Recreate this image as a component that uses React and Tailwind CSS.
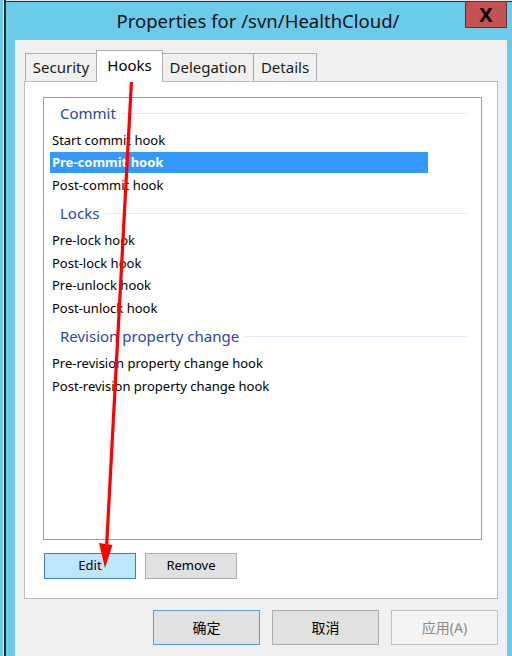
import React from "react";

const font = { fontFamily: '"Noto Sans", "Noto Sans CJK SC", sans-serif' };

function Item({ label, selected }) {
  if (selected) {
    return (
      <div className="h-[22.5px] flex items-center">
        <div className="ml-[6px] w-[378px] h-[21px] bg-[#3399ff] flex items-center pl-[2px] text-white font-bold text-[13px] leading-none">
          {label}
        </div>
      </div>
    );
  }
  return (
    <div className="h-[22.5px] flex items-center pl-[8px] text-[13px] leading-none text-black">
      {label}
    </div>
  );
}

function Header({ label, first }) {
  return (
    <div className={`${first ? "mt-[3px]" : "mt-[5px]"} mb-[4px] h-[24px] flex items-center pl-[16px] pr-[14px]`}>
      <span className="text-[15px] leading-none text-[#2b44a8] whitespace-nowrap">{label}</span>
      <div className="ml-[6px] flex-1 h-px bg-[#e3e9f5]" />
    </div>
  );
}

function Tab({ label, selected, w, extra }) {
  if (selected) {
    return (
      <div
        className={`relative z-10 -mb-px h-[32px] bg-white border border-b-0 border-[#acacac] flex items-start justify-center pt-[3px] text-[15px] text-black ${w} ${extra || ""}`}
      >
        {label}
      </div>
    );
  }
  return (
    <div
      className={`h-[28px] bg-[#f0f0f0] border border-b-0 border-[#acacac] flex items-center justify-center text-[15px] text-[#1a1a1a] ${w} ${extra || ""}`}
    >
      {label}
    </div>
  );
}

export default function App() {
  return (
    <div className="relative w-[512px] h-[656px] overflow-hidden bg-[#6bcbeb] flex" style={font}>
      <div className="w-[3px] h-full bg-[#6bcbeb]" />
      <div className="w-[1px] h-full bg-[#e8e8e8]" />
      <div className="flex-1 flex flex-col border-l-2 border-[#2d2d2d]">
        <div className="h-[1px] bg-[#e6e6e6]" />
        <div className="h-[1px] bg-[#2d2d2d]" />
        <div className="relative h-[38px] flex items-center justify-center pr-[2px]">
          <span className="text-[18.5px] text-[#111] leading-none">Properties for /svn/HealthCloud/</span>
          <div className="absolute right-[5px] -top-[1px] w-[42px] h-[27px] bg-[#c75050] border border-[#5b3434] flex items-center justify-center">
            <span className="text-[20px] font-bold text-black leading-none">X</span>
          </div>
        </div>
        <div className="flex-1 flex">
          <div className="w-[9px] bg-[#6bcbeb]" />
          <div className="w-[492px] bg-[#f0f0f0] flex flex-col px-[9px]">
            <div className="mt-[11px] h-[30px] flex items-end pl-[1px]">
              <Tab label="Security" w="w-[72px]" />
              <Tab label="Hooks" selected w="w-[67px]" extra="-ml-px" />
              <Tab label="Delegation" w="w-[92px]" extra="-ml-px" />
              <Tab label="Details" w="w-[64px]" extra="-ml-px" />
            </div>
            <div className="h-[518px] bg-white border border-[#bdbdbd] flex flex-col">
              <div className="ml-[18px] mt-[15px] w-[439px] h-[443px] border border-[#9c9c9c] flex flex-col">
                <Header label="Commit" first />
                <Item label="Start commit hook" />
                <Item label="Pre-commit hook" selected />
                <Item label="Post-commit hook" />
                <Header label="Locks" />
                <Item label="Pre-lock hook" />
                <Item label="Post-lock hook" />
                <Item label="Pre-unlock hook" />
                <Item label="Post-unlock hook" />
                <Header label="Revision property change" />
                <Item label="Pre-revision property change hook" />
                <Item label="Post-revision property change hook" />
              </div>
              <div className="mt-[13px] ml-[19px] flex gap-[9px]">
                <button className="w-[92px] h-[26px] bg-[#bee6fd] border border-[#3c7fb1] text-[13px] text-black flex items-center justify-center">
                  Edit
                </button>
                <button className="w-[92px] h-[26px] bg-[#e1e1e1] border border-[#adadad] text-[13px] text-black flex items-center justify-center">
                  Remove
                </button>
              </div>
            </div>
            <div className="mt-[11px] flex justify-end gap-[12px]">
              <button className="w-[107px] h-[35px] bg-[#e1e1e1] border border-[#5b9bd5] text-[14px] text-black flex items-center justify-center">
                确定
              </button>
              <button className="w-[107px] h-[35px] bg-[#e1e1e1] border border-[#adadad] text-[14px] text-black flex items-center justify-center">
                取消
              </button>
              <button className="w-[107px] h-[35px] bg-[#f4f4f4] border border-[#bfbfbf] text-[14px] text-[#8a8a8a] flex items-center justify-center">
                应用(A)
              </button>
            </div>
          </div>
          <div className="flex-1 bg-[#6bcbeb]" />
        </div>
      </div>
      <svg className="absolute left-0 top-0 pointer-events-none" width="512" height="656" viewBox="0 0 512 656">
        <line x1="132" y1="71" x2="106.5" y2="548" stroke="#ff0000" strokeWidth="3.2" />
        <polygon points="99,543 112.5,545 105,568" fill="#ff0000" />
      </svg>
    </div>
  );
}
